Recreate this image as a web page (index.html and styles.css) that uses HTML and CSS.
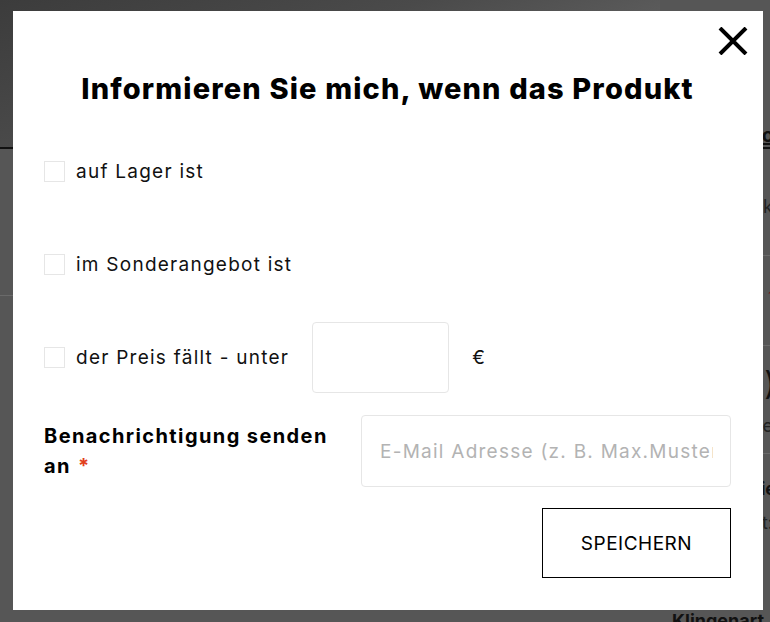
FILE: index.html
```html
<!DOCTYPE html>
<html lang="de">
<head>
<meta charset="utf-8">
<title>Benachrichtigung</title>
<link rel="stylesheet" href="styles.css">
</head>
<body>
<div class="page">
  <div class="page-hero">
    <div class="page-image"></div>
    <div class="page-side">
      <span class="page-link">Lo</span>
    </div>
  </div>
  <div class="page-rule"></div>
  <div class="page-body">
    <div class="page-col"></div>
    <div class="page-info">
      <p class="page-line m1">Stück</p>
      <hr class="page-sep s1">
      <p class="page-red">1</p>
      <hr class="page-sep s2">
      <p class="page-price">0)</p>
      <p class="page-line m2">Preise</p>
      <hr class="page-sep s3">
      <p class="page-bold">Lie</p>
      <p class="page-line m3">Art:</p>
      <p class="page-bold page-last">Klingenart</p>
    </div>
  </div>
</div>

<div class="overlay">
  <div class="modal">
    <button class="close" type="button" aria-label="Schließen">
      <svg width="30" height="28" viewBox="0 0 30 28"><path d="M2 1 L28 27 M28 1 L2 27" stroke="#000" stroke-width="4" fill="none"/></svg>
    </button>
    <h2 class="title">Informieren Sie mich, wenn das Produkt</h2>
    <form class="form">
      <label class="row">
        <span class="check"></span>
        <span class="opt">auf Lager ist</span>
      </label>
      <label class="row">
        <span class="check"></span>
        <span class="opt">im Sonderangebot ist</span>
      </label>
      <div class="row">
        <span class="check"></span>
        <span class="opt">der Preis fällt - unter</span>
        <span class="field price"></span>
        <span class="opt">€</span>
      </div>
      <div class="row email-row">
        <span class="email-label">Benachrichtigung senden an<span class="req">*</span></span>
        <span class="field email"><span class="placeholder">E-Mail Adresse (z. B. Max.Mustermann@domain.de)</span></span>
      </div>
      <div class="actions">
        <span class="save">SPEICHERN</span>
      </div>
    </form>
  </div>
</div>
</body>
</html>
```

FILE: styles.css
```css
html, body {
  margin: 0;
  padding: 0;
}
body {
  width: 770px;
  height: 622px;
  overflow: hidden;
  background: #565656;
  font-family: "Inter", "Noto Sans", sans-serif;
  position: relative;
}

/* background page, dimmed */
.page {
  display: flex;
  flex-direction: column;
}
.page-hero {
  display: flex;
  height: 147px;
}
.page-image {
  width: 660px;
  background: linear-gradient(160deg, #3c3c3c 0%, #4a4a4a 40%, #5e5e5e 70%, #565656 100%);
}
.page-side {
  flex: 1;
  display: flex;
  align-items: flex-end;
  justify-content: flex-end;
}
.page-link {
  color: #111;
  font-size: 20px;
  line-height: 24px;
  font-weight: 700;
  text-decoration: underline;
  margin-right: -4px;
}
.page-rule {
  height: 2px;
  background: #111;
}
.page-body {
  display: flex;
  flex: 1;
}
.page-col {
  width: 660px;
  height: 146px;
  border-bottom: 1px solid #6a6a6a;
}
.page-info {
  flex: 1;
  display: flex;
  flex-direction: column;
  align-items: flex-end;
}
.page-info p {
  margin: 0;
}
.page-line {
  margin-right: -3px !important;
  color: #222;
  font-size: 18px;
  line-height: 22px;
}
.page-info .m1 { margin-top: 47px; }
.page-info .m2 { margin-top: 12px; }
.page-info .m3 { margin-top: 12px; }
.page-sep {
  width: 100%;
  border: 0;
  border-top: 1px solid #6a6a6a;
  margin: 0;
}
.page-sep.s1 { margin-top: 37px; }
.page-sep.s2 { margin-top: 40px; }
.page-sep.s3 { margin-top: 16px; }
.page-red {
  margin: 33px -4px 0 0 !important;
  font-size: 14px;
  line-height: 16px;
  color: #7a1a1a;
}
.page-price {
  margin: 21px -6px 0 0 !important;
  font-size: 32px;
  line-height: 36px;
  color: #111;
}
.page-bold {
  margin: 24px -6px 0 0 !important;
  font-size: 18px;
  line-height: 22px;
  font-weight: 700;
  color: #111;
}
.page-info .page-last {
  margin-top: 76px !important;
  margin-right: 6px !important;
}

/* modal */
.overlay {
  position: absolute;
  left: 13px;
  top: 11px;
}
.modal {
  position: relative;
  width: 750px;
  height: 599px;
  box-sizing: border-box;
  background: #fff;
  padding: 58px 32px 0 31px;
}
.close {
  position: absolute;
  left: 705px;
  top: 16px;
  width: 30px;
  height: 28px;
  padding: 0;
  border: 0;
  background: none;
  display: block;
}
.close svg {
  display: block;
}
.title {
  margin: 0;
  text-align: center;
  font-size: 29px;
  line-height: 40px;
  font-weight: 800;
  color: #000;
  letter-spacing: 1.15px;
}
.form {
  margin: 27px 0 0;
  display: flex;
  flex-direction: column;
  gap: 22px;
}
.row {
  display: flex;
  align-items: center;
  min-height: 71px;
  gap: 23px;
}
.check {
  width: 19px;
  height: 19px;
  border: 1px solid #e6e6e6;
  flex: none;
  margin-right: -12px;
}
.opt {
  font-size: 19px;
  letter-spacing: 1.25px;
  color: #111;
}
.field {
  display: block;
  box-sizing: border-box;
  border: 1px solid #e6e6e6;
  border-radius: 4px;
  background: #fff;
}
.price {
  width: 137px;
  height: 71px;
}
.email-row {
  gap: 0;
  min-height: 72px;
}
.email-label {
  width: 300px;
  margin-right: 17px;
  font-size: 20px;
  font-weight: 700;
  letter-spacing: 1.4px;
  line-height: 30px;
  color: #000;
}
.req {
  color: #e2401c;
  margin-left: 7px;
}
.email {
  width: 370px;
  height: 72px;
  padding: 0 17px 0 18px;
  display: flex;
  align-items: center;
  overflow: hidden;
}
.placeholder {
  font-size: 19px;
  letter-spacing: 1.25px;
  color: #b3b3b3;
  white-space: nowrap;
  overflow: hidden;
}
.actions {
  display: flex;
  justify-content: flex-end;
  margin-top: -1px;
}
.save {
  width: 189px;
  height: 70px;
  box-sizing: border-box;
  border: 1px solid #000;
  display: flex;
  align-items: center;
  justify-content: center;
  font-size: 19px;
  letter-spacing: 0.5px;
  color: #000;
}
```
